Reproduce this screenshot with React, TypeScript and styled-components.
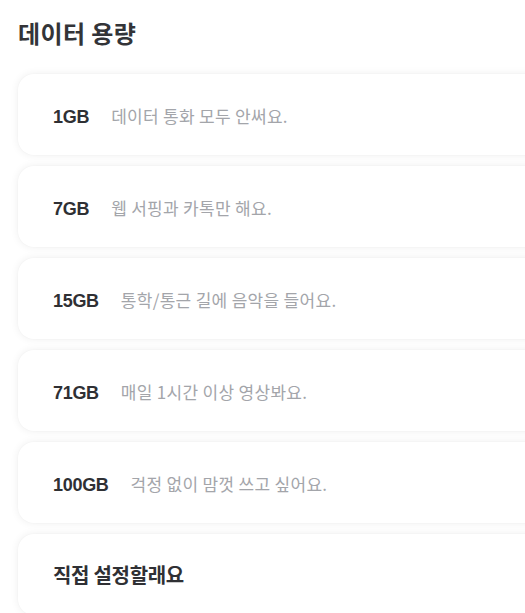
import React from "react";
import styled, { createGlobalStyle } from "styled-components";

const Global = createGlobalStyle`
  html, body {
    margin: 0;
    padding: 0;
    background: #ffffff;
    overflow: hidden;
  }
  body {
    font-family: "Noto Sans CJK KR", "Noto Sans", sans-serif;
  }
`;

const Page = styled.main`
  width: 525px;
  height: 613px;
  overflow: hidden;
  padding: 18px 0 0 18px;
  box-sizing: border-box;
`;

const Title = styled.h2`
  margin: 0 0 26px;
  font-size: 24px;
  line-height: 30px;
  font-weight: 700;
  color: #333438;
  letter-spacing: 0.4px;
`;

const List = styled.ul`
  list-style: none;
  margin: 0;
  padding: 0;
  display: flex;
  flex-direction: column;
  gap: 11px;
  width: 560px;
`;

const Card = styled.li`
  height: 81px;
  box-sizing: border-box;
  padding: 0 34px 0 35px;
  display: flex;
  align-items: center;
  background: #ffffff;
  border-radius: 16px;
  box-shadow: 0 0 9px rgba(0, 0, 0, 0.07), 0 0 2px rgba(0, 0, 0, 0.03);
`;

const Line = styled.div`
  display: flex;
  align-items: baseline;
  margin-top: 1px;
`;

const Amount = styled.span`
  font-family: "Liberation Sans", Arial, sans-serif;
  font-size: 18px;
  font-weight: 700;
  color: #2f3034;
  letter-spacing: -0.3px;
  margin-right: 22px;
`;

const Desc = styled.span`
  font-size: 17px;
  color: #a3a5aa;
  letter-spacing: 0.3px;
`;

const Custom = styled.span`
  font-size: 20px;
  font-weight: 700;
  color: #2f3034;
  letter-spacing: -0.3px;
`;

const plans = [
  { gb: "1GB", desc: "데이터 통화 모두 안써요." },
  { gb: "7GB", desc: "웹 서핑과 카톡만 해요." },
  { gb: "15GB", desc: "통학/통근 길에 음악을 들어요." },
  { gb: "71GB", desc: "매일 1시간 이상 영상봐요." },
  { gb: "100GB", desc: "걱정 없이 맘껏 쓰고 싶어요." },
];

export default function App() {
  return (
    <>
      <Global />
      <Page>
        <Title>데이터 용량</Title>
        <List>
          {plans.map((p) => (
            <Card key={p.gb}>
              <Line>
                <Amount>{p.gb}</Amount>
                <Desc>{p.desc}</Desc>
              </Line>
            </Card>
          ))}
          <Card>
            <Custom>직접 설정할래요</Custom>
          </Card>
        </List>
      </Page>
    </>
  );
}
